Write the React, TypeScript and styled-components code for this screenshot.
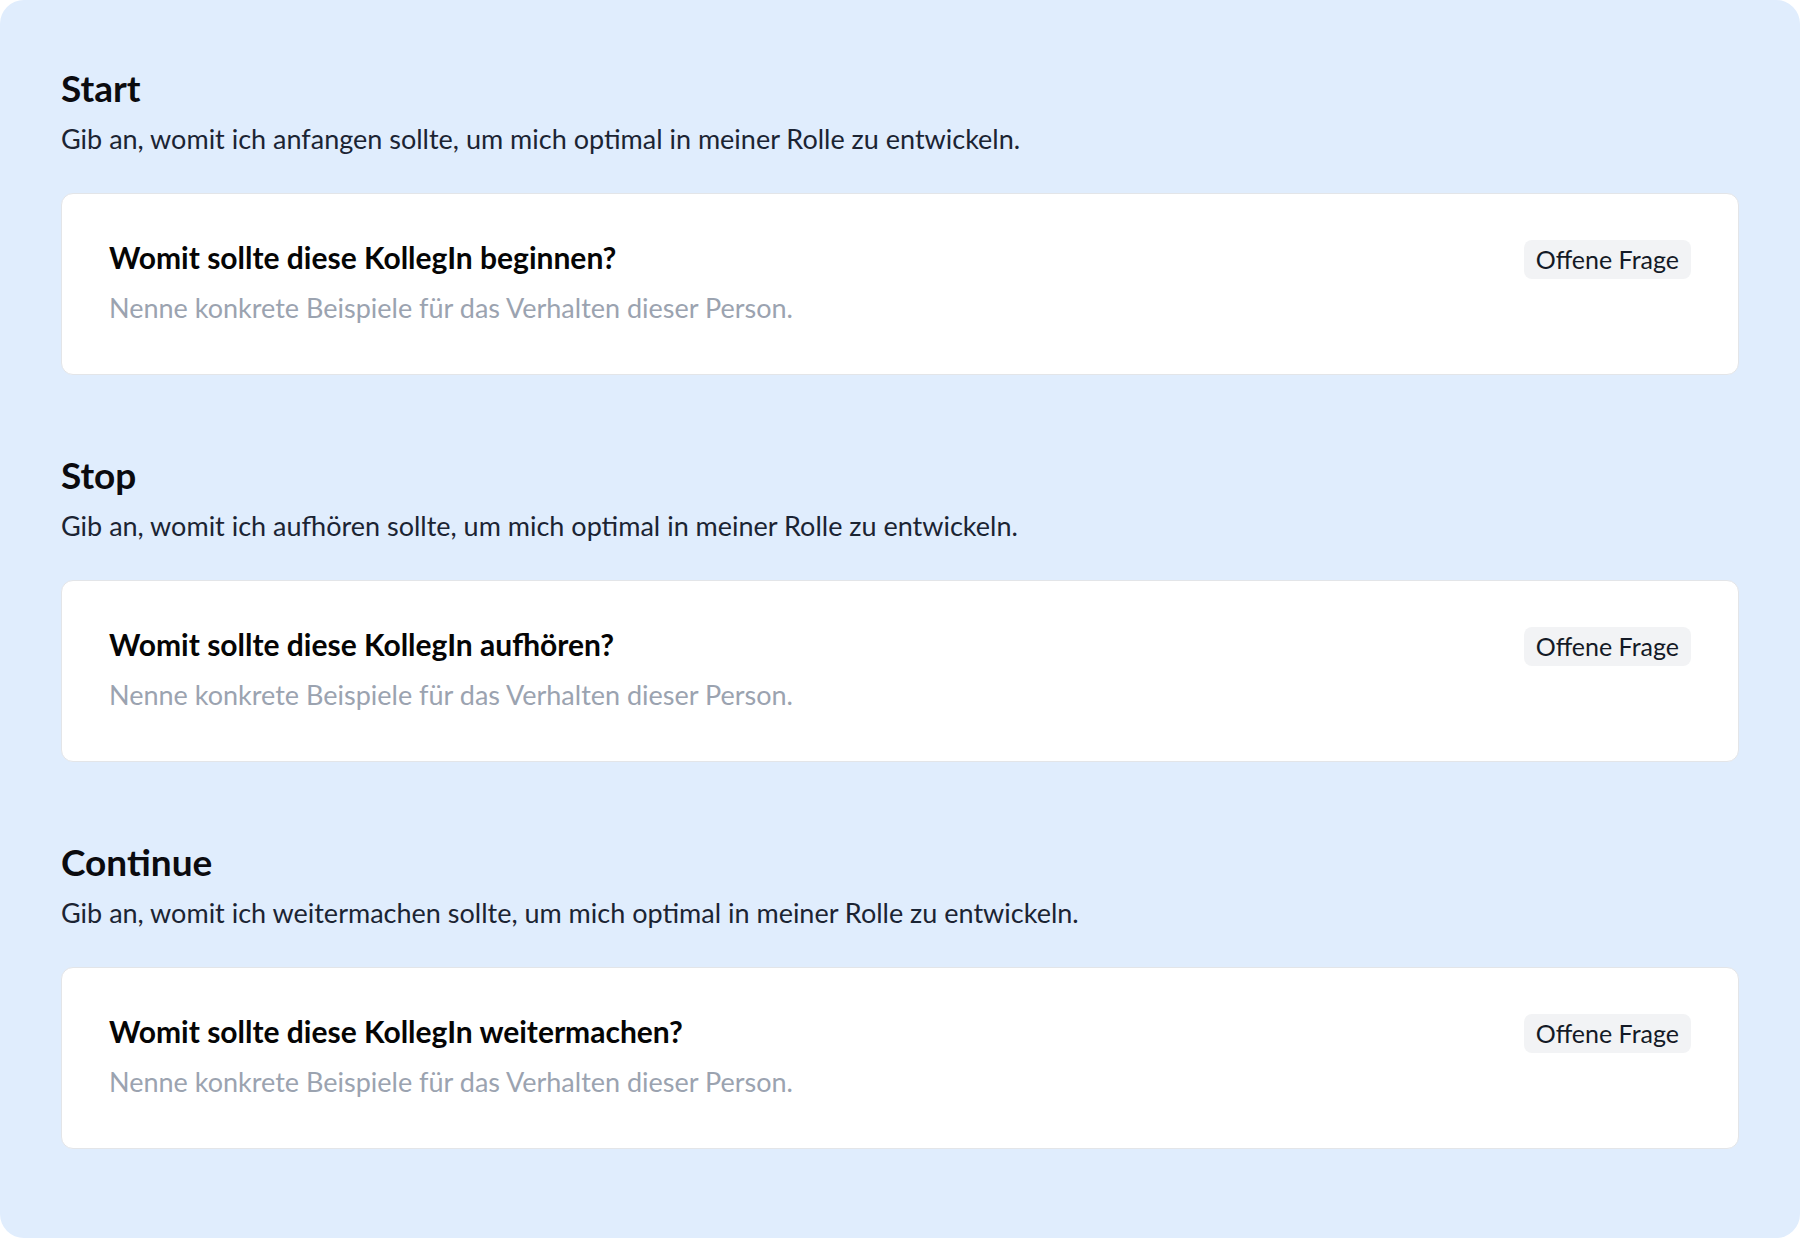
import styled, { createGlobalStyle } from 'styled-components';

/* ─── Global ─── */
const GlobalStyle = createGlobalStyle`
  html, body {
    margin: 0;
    padding: 0;
    background: #ffffff;
  }

  body {
    font-family: Lato, "Open Sans", sans-serif;
    -webkit-font-smoothing: antialiased;
  }
`;

/* ─── Data ─── */
const sections = [
  {
    title: 'Start',
    description: 'Gib an, womit ich anfangen sollte, um mich optimal in meiner Rolle zu entwickeln.',
    question: 'Womit sollte diese KollegIn beginnen?',
  },
  {
    title: 'Stop',
    description: 'Gib an, womit ich aufhören sollte, um mich optimal in meiner Rolle zu entwickeln.',
    question: 'Womit sollte diese KollegIn aufhören?',
  },
  {
    title: 'Continue',
    description: 'Gib an, womit ich weitermachen sollte, um mich optimal in meiner Rolle zu entwickeln.',
    question: 'Womit sollte diese KollegIn weitermachen?',
  },
];

const HINT = 'Nenne konkrete Beispiele für das Verhalten dieser Person.';

/* ─── Layout ─── */
const Panel = styled.main`
  box-sizing: border-box;
  width: 1800px;
  height: 1238px;
  padding: 68px 61px 0;
  background: #e0edfd;
  border-radius: 24px;
  display: flex;
  flex-direction: column;
  gap: 80px;
`;

const Section = styled.section`
  display: flex;
  flex-direction: column;
`;

const Heading = styled.h2`
  margin: 0;
  font-size: 37px;
  line-height: 40px;
  font-weight: 700;
  color: #0b0b0f;
`;

const Description = styled.p`
  margin: 15px 0 0;
  font-size: 27px;
  line-height: 32px;
  color: #1b2433;
`;

/* ─── Card ─── */
const Card = styled.div`
  margin-top: 38px;
  box-sizing: border-box;
  padding: 47px 47px 50px;
  background: #ffffff;
  border: 1px solid #e3e5e8;
  border-radius: 12px;
  display: flex;
  justify-content: space-between;
  align-items: flex-start;
`;

const CardText = styled.div`
  display: flex;
  flex-direction: column;
  gap: 19px;
`;

const Question = styled.h3`
  margin: 0;
  font-size: 30px;
  line-height: 32px;
  font-weight: 700;
  color: #050505;
`;

const Hint = styled.p`
  margin: 0;
  font-size: 27px;
  line-height: 32px;
  color: #9ba3b0;
`;

const Badge = styled.span`
  margin-top: -1px;
  padding: 4px 12px;
  font-size: 25px;
  line-height: 31px;
  color: #141a26;
  background: #f2f3f5;
  border-radius: 8px;
  white-space: nowrap;
`;

export default function App() {
  return (
    <>
      <GlobalStyle />
      <Panel>
        {sections.map((s) => (
          <Section key={s.title}>
            <Heading>{s.title}</Heading>
            <Description>{s.description}</Description>
            <Card>
              <CardText>
                <Question>{s.question}</Question>
                <Hint>{HINT}</Hint>
              </CardText>
              <Badge>Offene Frage</Badge>
            </Card>
          </Section>
        ))}
      </Panel>
    </>
  );
}
